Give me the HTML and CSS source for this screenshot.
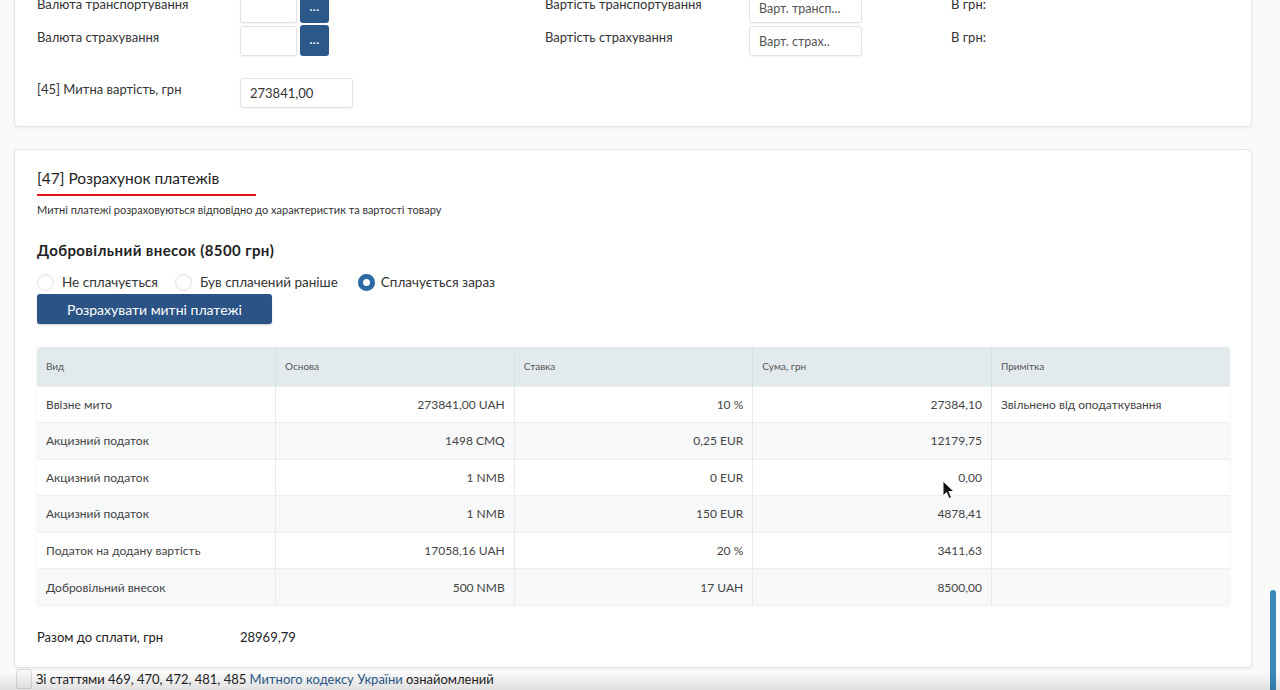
FILE: index.html
```html
<!DOCTYPE html>
<html lang="uk">
<head>
<meta charset="utf-8">
<title>Розрахунок платежів</title>
<link rel="stylesheet" href="styles.css">
</head>
<body>
<div class="page">
  <section class="card card-top">
    <div class="form-grid">
      <div class="lbl">Валюта транспортування</div>
      <div class="pick"><span class="inp inp-sm"></span><span class="dots">...</span></div>
      <div class="lbl lbl-r">Вартість транспортування</div>
      <div><span class="inp inp-md ph">Варт. трансп...</span></div>
      <div class="lbl lbl-r">В грн:</div>

      <div class="lbl">Валюта страхування</div>
      <div class="pick"><span class="inp inp-sm"></span><span class="dots">...</span></div>
      <div class="lbl lbl-r">Вартість страхування</div>
      <div><span class="inp inp-md ph">Варт. страх..</span></div>
      <div class="lbl lbl-r">В грн:</div>
    </div>
    <div class="form-row">
      <div class="lbl lbl-wide">[45] Митна вартість, грн</div>
      <span class="inp inp-md val">273841,00</span>
    </div>
  </section>

  <section class="card card-pay">
    <h2 class="title">[47] Розрахунок платежів</h2>
    <p class="subtitle">Митні платежі розраховуються відповідно до характеристик та вартості товару</p>
    <h3 class="subhead">Добровільний внесок (8500 грн)</h3>
    <div class="radios">
      <label class="radio"><span class="circle"></span>Не сплачується</label>
      <label class="radio"><span class="circle"></span>Був сплачений раніше</label>
      <label class="radio"><span class="circle checked"></span>Сплачується зараз</label>
    </div>
    <button class="btn">Розрахувати митні платежі</button>

    <div class="table-wrap">
      <table class="pay-table">
        <thead>
          <tr><th>Вид</th><th>Основа</th><th>Ставка</th><th>Сума, грн</th><th>Примітка</th></tr>
        </thead>
        <tbody>
          <tr><td>Ввізне мито</td><td class="num">273841,00 UAH</td><td class="num">10 %</td><td class="num">27384,10</td><td>Звільнено від оподаткування</td></tr>
          <tr><td>Акцизний податок</td><td class="num">1498 CMQ</td><td class="num">0,25 EUR</td><td class="num">12179,75</td><td></td></tr>
          <tr><td>Акцизний податок</td><td class="num">1 NMB</td><td class="num">0 EUR</td><td class="num">0,00</td><td></td></tr>
          <tr><td>Акцизний податок</td><td class="num">1 NMB</td><td class="num">150 EUR</td><td class="num">4878,41</td><td></td></tr>
          <tr><td>Податок на додану вартість</td><td class="num">17058,16 UAH</td><td class="num">20 %</td><td class="num">3411,63</td><td></td></tr>
          <tr><td>Добровільний внесок</td><td class="num">500 NMB</td><td class="num">17 UAH</td><td class="num">8500,00</td><td></td></tr>
        </tbody>
      </table>
    </div>

    <div class="total"><span class="total-lbl">Разом до сплати, грн</span><span>28969,79</span></div>
  </section>

  <div class="agree"><span class="chk"></span><span class="agree-text">Зі статтями 469, 470, 472, 481, 485 <a href="#" class="link">Митного кодексу України</a> ознайомлений</span></div>
</div>

<svg class="cursor" width="14" height="20" viewBox="0 0 14 20"><path d="M1 1 L1 16 L4.5 12.5 L7 18.5 L9.5 17.5 L7 11.5 L12 11.5 Z" fill="#111" stroke="#fff" stroke-width="1"/></svg>
<div class="scrollbar"></div>
<div class="bottom-fade"></div>
</body>
</html>
```

FILE: styles.css
```css
* { box-sizing: border-box; }
html, body { margin: 0; padding: 0; }
body {
  background: #fafafa;
  font-family: Lato, "Open Sans", "Noto Sans", sans-serif;
  color: #333;
  overflow: hidden;
  height: 690px;
}
.page {
  padding-left: 14px;
  width: 1266px;
}
.card {
  background: #fff;
  border: 1px solid #e6e6e6;
  border-radius: 4px;
  box-shadow: 0 1px 3px rgba(0,0,0,0.06);
  width: 1238px;
}
.card-top {
  margin-top: -20px;
  padding: 12px 22px 18px 22px;
}
.form-grid {
  display: grid;
  grid-template-columns: 203px 305px 204px 202px auto;
  grid-auto-rows: 30px;
  row-gap: 3px;
}
.lbl {
  font-size: 13px;
  line-height: 18px;
  padding-top: 2px;
  color: #333;
}
.lbl-r { font-size: 13px; }
.lbl-wide { width: 203px; }
.pick { display: flex; gap: 3px; align-items: flex-start; }
.inp {
  display: flex;
  align-items: center;
  height: 30px;
  background: #fff;
  border: 1px solid #e2e2e2;
  border-radius: 3px;
  box-shadow: 0 1px 2px rgba(0,0,0,0.06);
  font-size: 13px;
  padding-left: 9px;
  color: #333;
}
.inp-sm { width: 57px; }
.inp-md { width: 113px; }
.ph { color: #555; font-size: 12.5px; }
.dots {
  width: 29px;
  height: 31px;
  margin-top: -1px;
  background: #2c5889;
  border-radius: 3px;
  color: #fff;
  font-size: 12px;
  font-weight: bold;
  display: flex;
  align-items: center;
  justify-content: center;
  letter-spacing: 0.5px;
  padding-bottom: 3px;
}
.form-row {
  display: flex;
  margin-top: 22px;
}
.val { font-size: 13px; color: #333; }

.card-pay {
  margin-top: 22px;
  padding: 18px 22px 20px 22px;
}
.title {
  margin: 0;
  width: 219px;
  font-size: 15.5px;
  font-weight: normal;
  line-height: 20px;
  padding-bottom: 6px;
  border-bottom: 2px solid #e0161b;
  color: #222;
}
.subtitle {
  margin: 7px 0 0 0;
  font-size: 11px;
  line-height: 14px;
  color: #333;
}
.subhead {
  margin: 23px 0 0 0;
  font-size: 15px;
  line-height: 20px;
  font-weight: bold;
  letter-spacing: 0.4px;
  color: #222;
}
.radios {
  display: flex;
  margin-top: 12px;
  height: 20px;
  align-items: center;
}
.radio {
  display: flex;
  align-items: center;
  font-size: 13.5px;
  color: #333;
  margin-right: 17px;
}
.radio:nth-child(2) { margin-right: 20px; }
.circle {
  width: 17px;
  height: 17px;
  border-radius: 50%;
  border: 1px solid #e3e3e3;
  background: #fff;
  box-shadow: inset 0 1px 2px rgba(0,0,0,0.06);
  margin-right: 8px;
}
.circle.checked {
  border: 5px solid #2b6aa3;
  box-shadow: 0 0 1px rgba(0,0,0,0.2);
  margin-right: 6px;
}
.btn {
  display: block;
  margin-top: 2px;
  width: 235px;
  height: 30px;
  background: #2b5385;
  color: #fff;
  border: none;
  border-radius: 3px;
  font-family: inherit;
  font-size: 14px;
  padding: 0;
  box-shadow: 0 1px 2px rgba(0,0,0,0.2);
}
.table-wrap {
  margin-top: 23px;
  width: 1193px;
  border-radius: 4px;
  overflow: hidden;
  box-shadow: 0 1px 3px rgba(0,0,0,0.08);
}
.pay-table {
  width: 100%;
  border-collapse: collapse;
  table-layout: fixed;
}
.pay-table th {
  height: 39px;
  background: #e3eaed;
  font-size: 10px;
  font-weight: normal;
  color: #555;
  text-align: left;
  padding: 0 9px;
  border-right: 1px solid #d9e0e3;
}
.pay-table td {
  height: 36.5px;
  font-size: 12px;
  color: #444;
  padding: 0 9px;
  border-right: 1px solid #e8ebed;
  border-top: 1px solid #eceff1;
}
.pay-table th:last-child, .pay-table td:last-child { border-right: none; }
.pay-table tbody tr:nth-child(even) td { background: #f6f8f9; }
.pay-table tbody tr:nth-child(odd) td { background: #fff; }
.pay-table td.num { text-align: right; }
.total {
  margin-top: 22px;
  display: flex;
  font-size: 13px;
  line-height: 20px;
  color: #222;
}
.total-lbl { width: 203px; }
.agree {
  margin-top: 1px;
  display: flex;
  align-items: center;
  font-size: 13px;
  line-height: 20px;
  color: #222;
}
.chk {
  width: 16px;
  height: 20px;
  margin-left: 2px;
  margin-right: 4px;
  border: 1px solid #ddd;
  background: #f6f6f6;
  border-radius: 2px;
  flex: none;
}
.link { color: #2c5a8e; text-decoration: none; }
.cursor {
  position: fixed;
  left: 942px;
  top: 480px;
}
.scrollbar {
  position: fixed;
  left: 1270px;
  top: 590px;
  width: 6px;
  height: 110px;
  border-radius: 3px;
  background: #3a87b9;
}
.bottom-fade {
  position: fixed;
  left: 0;
  bottom: 0;
  width: 1280px;
  height: 18px;
  background: linear-gradient(rgba(0,0,0,0), rgba(0,0,0,0.1));
  pointer-events: none;
}
```
